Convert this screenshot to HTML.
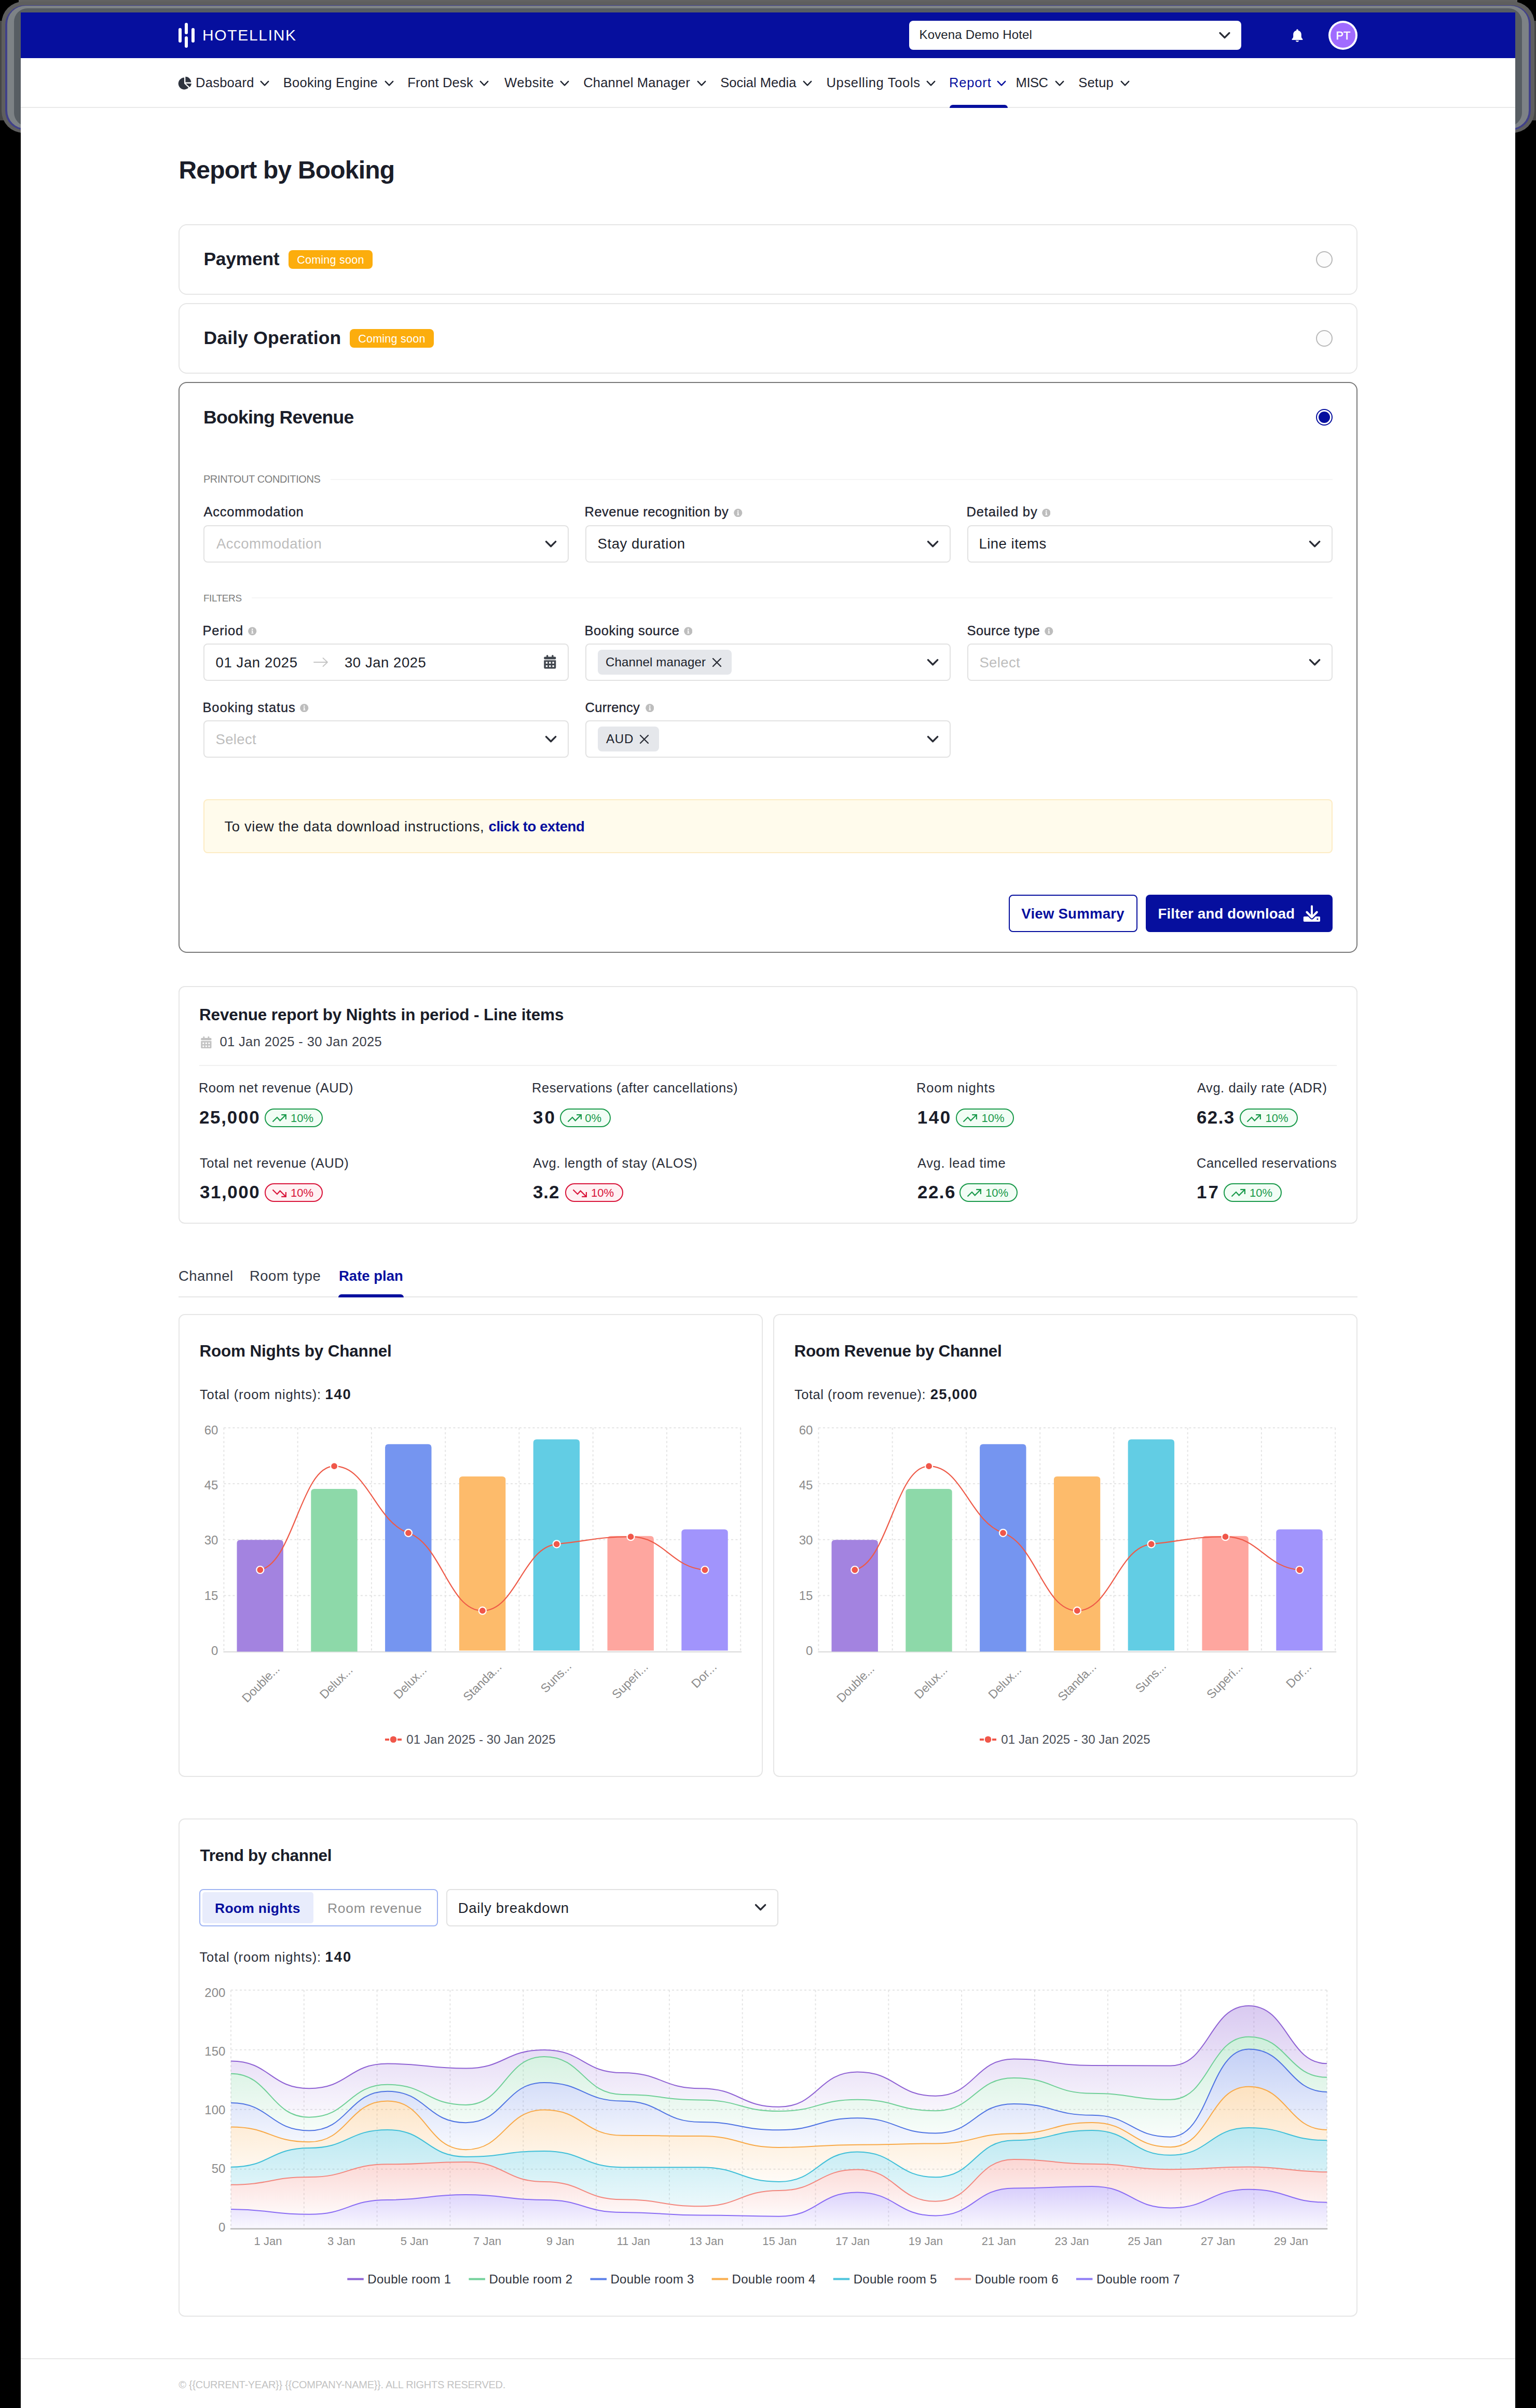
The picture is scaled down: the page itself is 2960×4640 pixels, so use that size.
<!DOCTYPE html>
<html><head><meta charset="utf-8"><title>Report by Booking</title>
<style>
html,body{margin:0;padding:0;background:#000;}
body{width:2960px;height:4640px;overflow:hidden;position:relative;font-family:"Liberation Sans", sans-serif;}
#page{position:absolute;left:0;top:0;width:2960px;height:4640px;overflow:hidden;}
#page div,#page svg,#page span.t{position:absolute;box-sizing:border-box;}
span.t{white-space:nowrap;font-family:"Liberation Sans", sans-serif;}
</style></head>
<body>
<div id="page">
<div style="left:36px;top:0px;width:2888px;height:4px;background:#626262;"></div>
<div style="left:0px;top:40px;width:2960px;height:192px;background:#454545;"></div>
<div style="left:3px;top:3px;width:2954px;height:253px;background:#5e5e5e;border-radius:42px;"></div>
<div style="left:10px;top:10px;width:2940px;height:241px;background:#40408a;border-radius:38px;"></div>
<div style="left:14px;top:11px;width:2932px;height:237px;background:#7d8286;border-radius:35px;"></div>
<div style="left:27px;top:16px;width:2906px;height:227px;background:#575d63;border-radius:26px;"></div>
<div style="left:40px;top:24px;width:2880px;height:4616px;background:#fff;"></div>
<div style="left:40px;top:24px;width:2880px;height:88px;background:#060f9e;"></div>
<div style="left:344px;top:54.2px;width:6.3px;height:28.3px;background:#fff;border-radius:3.2px;"></div>
<div style="left:356.2px;top:44px;width:6.3px;height:22px;background:#fff;border-radius:3.2px;"></div>
<div style="left:356.2px;top:70px;width:6.3px;height:21.8px;background:#fff;border-radius:3.2px;"></div>
<div style="left:369px;top:54.2px;width:6.3px;height:28.3px;background:#fff;border-radius:3.2px;"></div>
<span class="t" style="left:390.00px;top:53.40px;font-size:30px;line-height:30px;color:#fff;letter-spacing:1.662px;">HOTELLINK</span>
<div style="left:1752px;top:40px;width:640px;height:56px;background:#fff;border-radius:8px;"></div>
<span class="t" style="left:1771.50px;top:55.40px;font-size:24px;line-height:24px;color:#1c1f2b;letter-spacing:0.159px;">Kovena Demo Hotel</span>
<svg style="left:2346px;top:58px;" width="28" height="20" viewBox="0 0 28 20"><path d="M5 5.5 L14 14.5 L23 5.5" fill="none" stroke="#2a2d36" stroke-width="3.2" stroke-linecap="round" stroke-linejoin="round"/></svg>
<svg style="left:2488px;top:55px;" width="24" height="26" viewBox="0 0 24 26"><path d="M12 1.2c-1 0-1.8.8-1.8 1.8v.7C6.6 4.5 4.2 7.6 4.2 11.2v4.3c0 1.4-.6 2.8-1.6 3.8l-.9.9c-.6.6-.2 1.7.7 1.7h19.2c.9 0 1.3-1.1.7-1.7l-.9-.9c-1-1-1.6-2.400-1.6-3.800v-4.300c0-3.600-2.400-6.700-6-7.500V3c0-1-.8-1.800-1.800-1.800z" fill="#fff"/><path d="M8.800 23.300h6.400c-.300 1.500-1.600 2.500-3.200 2.500s-2.900-1-3.200-2.500z" fill="#fff"/></svg>
<div style="left:2560px;top:40px;width:56px;height:56px;background:#fff;border-radius:50%;"></div>
<div style="left:2564px;top:44px;width:48px;height:48px;background:#a06bff;border-radius:50%;"></div>
<span class="t" style="left:2574.40px;top:58.80px;font-size:21.5px;line-height:21.5px;color:#fff;letter-spacing:0.260px;-webkit-text-stroke:0.6px #fff;">PT</span>
<div style="left:40px;top:206px;width:2880px;height:2px;background:#e9e9e9;"></div>
<svg style="left:343px;top:147px;" width="28" height="26" viewBox="0 0 28 26"><path d="M12 2.600 A11.400 11.400 0 1 0 20.300 21.900 L12 14 Z" fill="#2f343f"/><path d="M14.400 0.800 V11.600 H25.300 A11 11 0 0 0 14.400 0.800 Z" fill="#2f343f"/><path d="M15.200 14 H26 A11.500 11.500 0 0 1 22.600 20.900 Z" fill="#2f343f"/></svg>
<span class="t" style="left:377.10px;top:146.80px;font-size:25.5px;line-height:25.5px;color:#1f2430;letter-spacing:0.245px;">Dasboard</span>
<svg style="left:500px;top:152px;" width="20" height="18" viewBox="0 0 20 18"><path d="M2.800 4.800 L10 12.300 L17.200 4.800" fill="none" stroke="#1f2430" stroke-width="2.500" stroke-linecap="round" stroke-linejoin="round"/></svg>
<span class="t" style="left:545.80px;top:146.80px;font-size:25.5px;line-height:25.5px;color:#1f2430;letter-spacing:0.257px;">Booking Engine</span>
<svg style="left:740px;top:152px;" width="20" height="18" viewBox="0 0 20 18"><path d="M2.800 4.800 L10 12.300 L17.200 4.800" fill="none" stroke="#1f2430" stroke-width="2.500" stroke-linecap="round" stroke-linejoin="round"/></svg>
<span class="t" style="left:785.20px;top:146.80px;font-size:25.5px;line-height:25.5px;color:#1f2430;letter-spacing:0.195px;">Front Desk</span>
<svg style="left:923.3px;top:152px;" width="20" height="18" viewBox="0 0 20 18"><path d="M2.800 4.800 L10 12.300 L17.200 4.800" fill="none" stroke="#1f2430" stroke-width="2.500" stroke-linecap="round" stroke-linejoin="round"/></svg>
<span class="t" style="left:972.00px;top:146.80px;font-size:25.5px;line-height:25.5px;color:#1f2430;letter-spacing:0.571px;">Website</span>
<svg style="left:1078px;top:152px;" width="20" height="18" viewBox="0 0 20 18"><path d="M2.800 4.800 L10 12.300 L17.200 4.800" fill="none" stroke="#1f2430" stroke-width="2.500" stroke-linecap="round" stroke-linejoin="round"/></svg>
<span class="t" style="left:1124.20px;top:146.80px;font-size:25.5px;line-height:25.5px;color:#1f2430;letter-spacing:0.198px;">Channel Manager</span>
<svg style="left:1342px;top:152px;" width="20" height="18" viewBox="0 0 20 18"><path d="M2.800 4.800 L10 12.300 L17.200 4.800" fill="none" stroke="#1f2430" stroke-width="2.500" stroke-linecap="round" stroke-linejoin="round"/></svg>
<span class="t" style="left:1388.20px;top:146.80px;font-size:25.5px;line-height:25.5px;color:#1f2430;letter-spacing:0.017px;">Social Media</span>
<svg style="left:1545.5px;top:152px;" width="20" height="18" viewBox="0 0 20 18"><path d="M2.800 4.800 L10 12.300 L17.200 4.800" fill="none" stroke="#1f2430" stroke-width="2.500" stroke-linecap="round" stroke-linejoin="round"/></svg>
<span class="t" style="left:1592.50px;top:146.80px;font-size:25.5px;line-height:25.5px;color:#1f2430;letter-spacing:0.675px;">Upselling Tools</span>
<svg style="left:1784px;top:152px;" width="20" height="18" viewBox="0 0 20 18"><path d="M2.800 4.800 L10 12.300 L17.200 4.800" fill="none" stroke="#1f2430" stroke-width="2.500" stroke-linecap="round" stroke-linejoin="round"/></svg>
<span class="t" style="left:1829.00px;top:146.80px;font-size:25.5px;line-height:25.5px;color:#060f9e;letter-spacing:0.849px;">Report</span>
<svg style="left:1919.5px;top:152px;" width="20" height="18" viewBox="0 0 20 18"><path d="M2.800 4.800 L10 12.300 L17.200 4.800" fill="none" stroke="#060f9e" stroke-width="2.500" stroke-linecap="round" stroke-linejoin="round"/></svg>
<span class="t" style="left:1957.60px;top:146.80px;font-size:25.5px;line-height:25.5px;color:#1f2430;letter-spacing:-0.445px;">MISC</span>
<svg style="left:2031.5px;top:152px;" width="20" height="18" viewBox="0 0 20 18"><path d="M2.800 4.800 L10 12.300 L17.200 4.800" fill="none" stroke="#1f2430" stroke-width="2.500" stroke-linecap="round" stroke-linejoin="round"/></svg>
<span class="t" style="left:2078.20px;top:146.80px;font-size:25.5px;line-height:25.5px;color:#1f2430;letter-spacing:0.236px;">Setup</span>
<svg style="left:2157.5px;top:152px;" width="20" height="18" viewBox="0 0 20 18"><path d="M2.800 4.800 L10 12.300 L17.200 4.800" fill="none" stroke="#1f2430" stroke-width="2.500" stroke-linecap="round" stroke-linejoin="round"/></svg>
<div style="left:1830px;top:202px;width:112px;height:6px;background:#060f9e;border-radius:6px 6px 0 0;"></div>
<span class="t" style="left:344.50px;top:304.40px;font-size:48px;line-height:48px;color:#1a1d29;font-weight:700;letter-spacing:-0.797px;">Report by Booking</span>
<div style="left:344px;top:432px;width:2272px;height:136px;border:2px solid #e6e6e6;border-radius:16px;background:#fff;"></div>
<div style="left:344px;top:584px;width:2272px;height:136px;border:2px solid #e6e6e6;border-radius:16px;background:#fff;"></div>
<div style="left:344px;top:736px;width:2272px;height:1100px;border:2px solid #787878;border-radius:16px;background:#fff;"></div>
<span class="t" style="left:392.50px;top:482.40px;font-size:35.5px;line-height:35.5px;color:#1a1d29;font-weight:700;letter-spacing:-0.318px;">Payment</span>
<div style="left:556px;top:482px;width:162px;height:36px;background:#fcad0d;border-radius:8px;"></div>
<span class="t" style="left:572.20px;top:490.80px;font-size:21.5px;line-height:21.5px;color:#fff;letter-spacing:0.248px;">Coming soon</span>
<span class="t" style="left:392.50px;top:634.40px;font-size:35.5px;line-height:35.5px;color:#1a1d29;font-weight:700;letter-spacing:0.173px;">Daily Operation</span>
<div style="left:674px;top:634px;width:162px;height:36px;background:#fcad0d;border-radius:8px;"></div>
<span class="t" style="left:690.20px;top:642.80px;font-size:21.5px;line-height:21.5px;color:#fff;letter-spacing:0.248px;">Coming soon</span>
<div style="left:2536px;top:484px;width:32px;height:32px;border:2px solid #b9b9b9;border-radius:50%;background:#fcfcfc;"></div>
<div style="left:2536px;top:636px;width:32px;height:32px;border:2px solid #b9b9b9;border-radius:50%;background:#fcfcfc;"></div>
<div style="left:2536px;top:788px;width:32px;height:32px;border:2.500px solid #060f9e;border-radius:50%;background:#fff;"></div>
<div style="left:2541px;top:793px;width:22px;height:22px;background:#060f9e;border-radius:50%;"></div>
<span class="t" style="left:392.00px;top:786.90px;font-size:35.5px;line-height:35.5px;color:#1a1d29;font-weight:700;letter-spacing:-0.677px;">Booking Revenue</span>
<span class="t" style="left:391.90px;top:913.20px;font-size:20px;line-height:20px;color:#7d7d7d;letter-spacing:-0.363px;">PRINTOUT CONDITIONS</span>
<div style="left:637px;top:923px;width:1931px;height:2px;background:#f5f5f5;"></div>
<span class="t" style="left:391.90px;top:1142.60px;font-size:19px;line-height:19px;color:#7d7d7d;letter-spacing:-0.424px;">FILTERS</span>
<div style="left:484.7px;top:1151px;width:2083.3px;height:2px;background:#f5f5f5;"></div>
<span class="t" style="left:392.50px;top:974.40px;font-size:25.5px;line-height:25.5px;color:#1f2430;letter-spacing:0.787px;-webkit-text-stroke:0.35px #1f2430;">Accommodation</span>
<span class="t" style="left:1126.60px;top:974.40px;font-size:25.5px;line-height:25.5px;color:#1f2430;letter-spacing:0.439px;-webkit-text-stroke:0.35px #1f2430;">Revenue recognition by</span>
<svg style="left:1414px;top:979.5px;" width="16.5" height="16.5" viewBox="0 0 16.5 16.5"><circle cx="8.250" cy="8.250" r="8.100" fill="#bdbdbd"/><circle cx="8.250" cy="4.700" r="1.350" fill="#fff"/><path d="M6.700 7.100h2.700v4.300h1v1.300H6.300v-1.300h1.100V8.400H6.700z" fill="#fff"/></svg>
<span class="t" style="left:1862.50px;top:974.40px;font-size:25.5px;line-height:25.5px;color:#1f2430;letter-spacing:0.858px;-webkit-text-stroke:0.35px #1f2430;">Detailed by</span>
<svg style="left:2007.7px;top:979.5px;" width="16.5" height="16.5" viewBox="0 0 16.5 16.5"><circle cx="8.250" cy="8.250" r="8.100" fill="#bdbdbd"/><circle cx="8.250" cy="4.700" r="1.350" fill="#fff"/><path d="M6.700 7.100h2.700v4.300h1v1.300H6.300v-1.300h1.100V8.400H6.700z" fill="#fff"/></svg>
<span class="t" style="left:390.50px;top:1202.90px;font-size:25.5px;line-height:25.5px;color:#1f2430;letter-spacing:0.794px;-webkit-text-stroke:0.35px #1f2430;">Period</span>
<svg style="left:478px;top:1208px;" width="16.5" height="16.5" viewBox="0 0 16.5 16.5"><circle cx="8.250" cy="8.250" r="8.100" fill="#bdbdbd"/><circle cx="8.250" cy="4.700" r="1.350" fill="#fff"/><path d="M6.700 7.100h2.700v4.300h1v1.300H6.300v-1.300h1.100V8.400H6.700z" fill="#fff"/></svg>
<span class="t" style="left:1126.60px;top:1202.90px;font-size:25.5px;line-height:25.5px;color:#1f2430;letter-spacing:0.508px;-webkit-text-stroke:0.35px #1f2430;">Booking source</span>
<svg style="left:1317.7px;top:1208px;" width="16.5" height="16.5" viewBox="0 0 16.5 16.5"><circle cx="8.250" cy="8.250" r="8.100" fill="#bdbdbd"/><circle cx="8.250" cy="4.700" r="1.350" fill="#fff"/><path d="M6.700 7.100h2.700v4.300h1v1.300H6.300v-1.300h1.100V8.400H6.700z" fill="#fff"/></svg>
<span class="t" style="left:1863.50px;top:1202.90px;font-size:25.5px;line-height:25.5px;color:#1f2430;letter-spacing:0.410px;-webkit-text-stroke:0.35px #1f2430;">Source type</span>
<svg style="left:2013.4px;top:1208px;" width="16.5" height="16.5" viewBox="0 0 16.5 16.5"><circle cx="8.250" cy="8.250" r="8.100" fill="#bdbdbd"/><circle cx="8.250" cy="4.700" r="1.350" fill="#fff"/><path d="M6.700 7.100h2.700v4.300h1v1.300H6.300v-1.300h1.100V8.400H6.700z" fill="#fff"/></svg>
<span class="t" style="left:390.50px;top:1350.80px;font-size:25.5px;line-height:25.5px;color:#1f2430;letter-spacing:0.845px;-webkit-text-stroke:0.35px #1f2430;">Booking status</span>
<svg style="left:578px;top:1355.9px;" width="16.5" height="16.5" viewBox="0 0 16.5 16.5"><circle cx="8.250" cy="8.250" r="8.100" fill="#bdbdbd"/><circle cx="8.250" cy="4.700" r="1.350" fill="#fff"/><path d="M6.700 7.100h2.700v4.300h1v1.300H6.300v-1.300h1.100V8.400H6.700z" fill="#fff"/></svg>
<span class="t" style="left:1127.60px;top:1350.80px;font-size:25.5px;line-height:25.5px;color:#1f2430;letter-spacing:0.244px;-webkit-text-stroke:0.35px #1f2430;">Currency</span>
<svg style="left:1243.75px;top:1355.9px;" width="16.5" height="16.5" viewBox="0 0 16.5 16.5"><circle cx="8.250" cy="8.250" r="8.100" fill="#bdbdbd"/><circle cx="8.250" cy="4.700" r="1.350" fill="#fff"/><path d="M6.700 7.100h2.700v4.300h1v1.300H6.300v-1.300h1.100V8.400H6.700z" fill="#fff"/></svg>
<div style="left:392px;top:1012px;width:704px;height:72px;border:2px solid #e2e2e2;border-radius:8px;background:#fff;"></div>
<svg style="left:1047px;top:1038px;" width="28" height="22" viewBox="0 0 28 22"><path d="M5.500 5.600 L14.600 14.700 L23.700 5.600" fill="none" stroke="#2a2d36" stroke-width="3.400" stroke-linecap="round" stroke-linejoin="round"/></svg>
<span class="t" style="left:417.00px;top:1034.40px;font-size:27.5px;line-height:27.5px;color:#bdbdbd;letter-spacing:0.468px;">Accommodation</span>
<div style="left:1128px;top:1012px;width:704px;height:72px;border:2px solid #e2e2e2;border-radius:8px;background:#fff;"></div>
<svg style="left:1783px;top:1038px;" width="28" height="22" viewBox="0 0 28 22"><path d="M5.500 5.600 L14.600 14.700 L23.700 5.600" fill="none" stroke="#2a2d36" stroke-width="3.400" stroke-linecap="round" stroke-linejoin="round"/></svg>
<span class="t" style="left:1151.60px;top:1034.40px;font-size:27.5px;line-height:27.5px;color:#1c1f2b;letter-spacing:0.533px;">Stay duration</span>
<div style="left:1864px;top:1012px;width:704px;height:72px;border:2px solid #e2e2e2;border-radius:8px;background:#fff;"></div>
<svg style="left:2519px;top:1038px;" width="28" height="22" viewBox="0 0 28 22"><path d="M5.500 5.600 L14.600 14.700 L23.700 5.600" fill="none" stroke="#2a2d36" stroke-width="3.400" stroke-linecap="round" stroke-linejoin="round"/></svg>
<span class="t" style="left:1886.40px;top:1034.40px;font-size:27.5px;line-height:27.5px;color:#1c1f2b;letter-spacing:0.502px;">Line items</span>
<div style="left:392px;top:1240px;width:704px;height:72px;border:2px solid #e2e2e2;border-radius:8px;background:#fff;"></div>
<span class="t" style="left:415.50px;top:1262.90px;font-size:27.5px;line-height:27.5px;color:#1c1f2b;letter-spacing:0.611px;">01 Jan 2025</span>
<svg style="left:603px;top:1264px;" width="32" height="24" viewBox="0 0 32 24"><path d="M2 12 H28 M19.500 4 L28 12 L19.500 20" fill="none" stroke="#c4c4c4" stroke-width="1.800" stroke-linecap="round" stroke-linejoin="round"/></svg>
<span class="t" style="left:664.00px;top:1262.90px;font-size:27.5px;line-height:27.5px;color:#1c1f2b;letter-spacing:0.551px;">30 Jan 2025</span>
<svg style="left:1048px;top:1262px;" width="24" height="27" viewBox="0 0 24 27"><g fill="#41464e"><rect x="0.300" y="3.500" width="23" height="5" rx="1.800"/><rect x="5" y="0" width="3.300" height="5" rx="1.600"/><rect x="15.300" y="0" width="3.300" height="5" rx="1.600"/><path d="M0.300 10.300 H23.300 V24.200 a2.200 2.200 0 0 1 -2.200 2.200 H2.500 a2.200 2.200 0 0 1 -2.200 -2.200 Z M3.800 13.300 v3.400 h3.400 v-3.400 Z M10.100 13.300 v3.400 h3.400 v-3.400 Z M16.400 13.300 v3.400 h3.400 v-3.400 Z M3.800 19.900 v3.400 h3.400 v-3.400 Z M10.100 19.900 v3.400 h3.400 v-3.400 Z M16.400 19.900 v3.400 h3.400 v-3.400 Z" fill-rule="evenodd"/></g></svg>
<div style="left:1128px;top:1240px;width:704px;height:72px;border:2px solid #e2e2e2;border-radius:8px;background:#fff;"></div>
<svg style="left:1783px;top:1266px;" width="28" height="22" viewBox="0 0 28 22"><path d="M5.500 5.600 L14.600 14.700 L23.700 5.600" fill="none" stroke="#2a2d36" stroke-width="3.400" stroke-linecap="round" stroke-linejoin="round"/></svg>
<div style="left:1152px;top:1252px;width:258px;height:48px;background:#e5e7eb;border-radius:8px;"></div>
<span class="t" style="left:1167.00px;top:1264.10px;font-size:24px;line-height:24px;color:#1c1f2b;letter-spacing:0.157px;">Channel manager</span>
<svg style="left:1371.4px;top:1265.5px;" width="21" height="21" viewBox="0 0 21 21"><path d="M3 3 L18 18 M18 3 L3 18" fill="none" stroke="#2a2d36" stroke-width="2.300" stroke-linecap="round"/></svg>
<div style="left:1864px;top:1240px;width:704px;height:72px;border:2px solid #e2e2e2;border-radius:8px;background:#fff;"></div>
<svg style="left:2519px;top:1266px;" width="28" height="22" viewBox="0 0 28 22"><path d="M5.500 5.600 L14.600 14.700 L23.700 5.600" fill="none" stroke="#2a2d36" stroke-width="3.400" stroke-linecap="round" stroke-linejoin="round"/></svg>
<span class="t" style="left:1887.40px;top:1262.90px;font-size:27.5px;line-height:27.5px;color:#bdbdbd;letter-spacing:0.362px;">Select</span>
<div style="left:392px;top:1388px;width:704px;height:72px;border:2px solid #e2e2e2;border-radius:8px;background:#fff;"></div>
<svg style="left:1047px;top:1414px;" width="28" height="22" viewBox="0 0 28 22"><path d="M5.500 5.600 L14.600 14.700 L23.700 5.600" fill="none" stroke="#2a2d36" stroke-width="3.400" stroke-linecap="round" stroke-linejoin="round"/></svg>
<span class="t" style="left:415.50px;top:1410.80px;font-size:27.5px;line-height:27.5px;color:#bdbdbd;letter-spacing:0.342px;">Select</span>
<div style="left:1128px;top:1388px;width:704px;height:72px;border:2px solid #e2e2e2;border-radius:8px;background:#fff;"></div>
<svg style="left:1783px;top:1414px;" width="28" height="22" viewBox="0 0 28 22"><path d="M5.500 5.600 L14.600 14.700 L23.700 5.600" fill="none" stroke="#2a2d36" stroke-width="3.400" stroke-linecap="round" stroke-linejoin="round"/></svg>
<div style="left:1152px;top:1400px;width:118px;height:48px;background:#e5e7eb;border-radius:8px;"></div>
<span class="t" style="left:1168.00px;top:1412.10px;font-size:24px;line-height:24px;color:#1c1f2b;letter-spacing:0.830px;">AUD</span>
<svg style="left:1230.8px;top:1413.5px;" width="21" height="21" viewBox="0 0 21 21"><path d="M3 3 L18 18 M18 3 L3 18" fill="none" stroke="#2a2d36" stroke-width="2.300" stroke-linecap="round"/></svg>
<div style="left:392px;top:1540px;width:2176px;height:104px;background:#fffbec;border:2px solid #fdecc4;border-radius:8px;"></div>
<span class="t" style="left:432.50px;top:1579.40px;font-size:27.5px;line-height:27.5px;color:#1c1f2b;letter-spacing:0.570px;">To view the data download instructions,</span>
<span class="t" style="left:941.50px;top:1579.40px;font-size:27.5px;line-height:27.5px;color:#060f9e;font-weight:700;letter-spacing:-0.410px;">click to extend</span>
<div style="left:1944px;top:1724px;width:248px;height:72px;border:2px solid #060f9e;border-radius:8px;background:#fff;"></div>
<span class="t" style="left:1968.30px;top:1747.40px;font-size:27.5px;line-height:27.5px;color:#060f9e;font-weight:700;letter-spacing:0.277px;">View Summary</span>
<div style="left:2208px;top:1724px;width:360px;height:72px;background:#060f9e;border-radius:8px;"></div>
<span class="t" style="left:2231.50px;top:1747.40px;font-size:27.5px;line-height:27.5px;color:#fff;font-weight:700;letter-spacing:0.215px;">Filter and download</span>
<svg style="left:2510px;top:1742px;" width="36" height="36" viewBox="0 0 36 36"><rect x="1.800" y="24" width="32.200" height="10" rx="1.800" fill="#fff"/><path d="M18 4.200 V24 M8.400 15.500 L18 25.600 L27.800 15.500" fill="none" stroke="#060f9e" stroke-width="8" stroke-linecap="round" stroke-linejoin="round"/><path d="M18 4.200 V24 M8.400 15.500 L18 25.600 L27.800 15.500" fill="none" stroke="#fff" stroke-width="4" stroke-linecap="round" stroke-linejoin="round"/><circle cx="28.900" cy="29" r="1.600" fill="#060f9e"/></svg>
<div style="left:344px;top:1900px;width:2272px;height:458px;border:2px solid #e6e6e6;border-radius:12px;background:#fff;"></div>
<span class="t" style="left:383.90px;top:1940.40px;font-size:31.5px;line-height:31.5px;color:#1a1d29;font-weight:700;letter-spacing:-0.136px;">Revenue report by Nights in period - Line items</span>
<svg style="left:387.4px;top:1996.5px;" width="21.12" height="23.76" viewBox="0 0 24 27"><g fill="#c2c2c2"><rect x="0.300" y="3.500" width="23" height="5" rx="1.800"/><rect x="5" y="0" width="3.300" height="5" rx="1.600"/><rect x="15.300" y="0" width="3.300" height="5" rx="1.600"/><path d="M0.300 10.300 H23.300 V24.200 a2.200 2.200 0 0 1 -2.200 2.200 H2.500 a2.200 2.200 0 0 1 -2.200 -2.200 Z M3.800 13.300 v3.400 h3.400 v-3.400 Z M10.100 13.300 v3.400 h3.400 v-3.400 Z M16.400 13.300 v3.400 h3.400 v-3.400 Z M3.800 19.900 v3.400 h3.400 v-3.400 Z M10.100 19.900 v3.400 h3.400 v-3.400 Z M16.400 19.900 v3.400 h3.400 v-3.400 Z" fill-rule="evenodd"/></g></svg>
<span class="t" style="left:423.40px;top:1995.10px;font-size:25.5px;line-height:25.5px;color:#3c404a;letter-spacing:0.374px;">01 Jan 2025 - 30 Jan 2025</span>
<div style="left:384px;top:2052px;width:2192px;height:2px;background:#f0f0f0;"></div>
<span class="t" style="left:382.90px;top:2084.40px;font-size:25.5px;line-height:25.5px;color:#2a2e39;letter-spacing:0.471px;">Room net revenue (AUD)</span>
<span class="t" style="left:383.90px;top:2135.00px;font-size:35px;line-height:35px;color:#1a1d29;font-weight:700;letter-spacing:1.763px;">25,000</span>
<div style="left:510px;top:2136px;width:112px;height:36px;border:2px solid #1a9a4b;border-radius:18px;background:#f2fdf5;"></div>
<svg style="left:523.6px;top:2145.6px;" width="29" height="18" viewBox="0 0 29 18"><path d="M1.500 15.500 L10 7 L15.700 13.300 L26.500 2.500 M18.200 2.200 H26.900 V11" fill="none" stroke="#1a9a4b" stroke-width="2.200" stroke-linecap="butt" stroke-linejoin="miter"/></svg>
<span class="t" style="left:560.03px;top:2144.20px;font-size:22px;line-height:22px;color:#1a9a4b;">10%</span>
<span class="t" style="left:384.90px;top:2228.60px;font-size:25.5px;line-height:25.5px;color:#2a2e39;letter-spacing:0.607px;">Total net revenue (AUD)</span>
<span class="t" style="left:384.90px;top:2278.90px;font-size:35px;line-height:35px;color:#1a1d29;font-weight:700;letter-spacing:1.563px;">31,000</span>
<div style="left:510px;top:2280px;width:112px;height:36px;border:2px solid #d9143a;border-radius:18px;background:#fff1f3;"></div>
<svg style="left:523.6px;top:2289.6px;" width="29" height="18" viewBox="0 0 29 18"><path d="M1.500 2.500 L10 11 L15.700 4.700 L26.500 15.500 M18.200 15.800 H26.900 V7" fill="none" stroke="#d9143a" stroke-width="2.200" stroke-linecap="butt" stroke-linejoin="miter"/></svg>
<span class="t" style="left:560.03px;top:2288.20px;font-size:22px;line-height:22px;color:#d9143a;">10%</span>
<span class="t" style="left:1025.00px;top:2084.40px;font-size:25.5px;line-height:25.5px;color:#2a2e39;letter-spacing:0.548px;">Reservations (after cancellations)</span>
<span class="t" style="left:1027.00px;top:2135.00px;font-size:35px;line-height:35px;color:#1a1d29;font-weight:700;letter-spacing:3.000px;">30</span>
<div style="left:1079px;top:2136px;width:98px;height:36px;border:2px solid #1a9a4b;border-radius:18px;background:#f2fdf5;"></div>
<svg style="left:1092.6px;top:2145.6px;" width="29" height="18" viewBox="0 0 29 18"><path d="M1.500 15.500 L10 7 L15.700 13.300 L26.500 2.500 M18.200 2.200 H26.900 V11" fill="none" stroke="#1a9a4b" stroke-width="2.200" stroke-linecap="butt" stroke-linejoin="miter"/></svg>
<span class="t" style="left:1127.26px;top:2144.20px;font-size:22px;line-height:22px;color:#1a9a4b;">0%</span>
<span class="t" style="left:1027.00px;top:2228.60px;font-size:25.5px;line-height:25.5px;color:#2a2e39;letter-spacing:0.602px;">Avg. length of stay (ALOS)</span>
<span class="t" style="left:1027.00px;top:2278.90px;font-size:35px;line-height:35px;color:#1a1d29;font-weight:700;letter-spacing:0.905px;">3.2</span>
<div style="left:1089px;top:2280px;width:112px;height:36px;border:2px solid #d9143a;border-radius:18px;background:#fff1f3;"></div>
<svg style="left:1102.6px;top:2289.6px;" width="29" height="18" viewBox="0 0 29 18"><path d="M1.500 2.500 L10 11 L15.700 4.700 L26.500 15.500 M18.200 15.800 H26.900 V7" fill="none" stroke="#d9143a" stroke-width="2.200" stroke-linecap="butt" stroke-linejoin="miter"/></svg>
<span class="t" style="left:1139.03px;top:2288.20px;font-size:22px;line-height:22px;color:#d9143a;">10%</span>
<span class="t" style="left:1766.00px;top:2084.40px;font-size:25.5px;line-height:25.5px;color:#2a2e39;letter-spacing:0.800px;">Room nights</span>
<span class="t" style="left:1767.80px;top:2135.00px;font-size:35px;line-height:35px;color:#1a1d29;font-weight:700;letter-spacing:2.485px;">140</span>
<div style="left:1841.5px;top:2136px;width:112px;height:36px;border:2px solid #1a9a4b;border-radius:18px;background:#f2fdf5;"></div>
<svg style="left:1855.1px;top:2145.6px;" width="29" height="18" viewBox="0 0 29 18"><path d="M1.500 15.500 L10 7 L15.700 13.300 L26.500 2.500 M18.200 2.200 H26.900 V11" fill="none" stroke="#1a9a4b" stroke-width="2.200" stroke-linecap="butt" stroke-linejoin="miter"/></svg>
<span class="t" style="left:1891.53px;top:2144.20px;font-size:22px;line-height:22px;color:#1a9a4b;">10%</span>
<span class="t" style="left:1768.00px;top:2228.60px;font-size:25.5px;line-height:25.5px;color:#2a2e39;letter-spacing:0.651px;">Avg. lead time</span>
<span class="t" style="left:1768.00px;top:2278.90px;font-size:35px;line-height:35px;color:#1a1d29;font-weight:700;letter-spacing:1.415px;">22.6</span>
<div style="left:1849px;top:2280px;width:112px;height:36px;border:2px solid #1a9a4b;border-radius:18px;background:#f2fdf5;"></div>
<svg style="left:1862.6px;top:2289.6px;" width="29" height="18" viewBox="0 0 29 18"><path d="M1.500 15.500 L10 7 L15.700 13.300 L26.500 2.500 M18.200 2.200 H26.900 V11" fill="none" stroke="#1a9a4b" stroke-width="2.200" stroke-linecap="butt" stroke-linejoin="miter"/></svg>
<span class="t" style="left:1899.03px;top:2288.20px;font-size:22px;line-height:22px;color:#1a9a4b;">10%</span>
<span class="t" style="left:2307.00px;top:2084.40px;font-size:25.5px;line-height:25.5px;color:#2a2e39;letter-spacing:0.548px;">Avg. daily rate (ADR)</span>
<span class="t" style="left:2306.00px;top:2135.00px;font-size:35px;line-height:35px;color:#1a1d29;font-weight:700;letter-spacing:1.348px;">62.3</span>
<div style="left:2388.5px;top:2136px;width:112px;height:36px;border:2px solid #1a9a4b;border-radius:18px;background:#f2fdf5;"></div>
<svg style="left:2402.1px;top:2145.6px;" width="29" height="18" viewBox="0 0 29 18"><path d="M1.500 15.500 L10 7 L15.700 13.300 L26.500 2.500 M18.200 2.200 H26.900 V11" fill="none" stroke="#1a9a4b" stroke-width="2.200" stroke-linecap="butt" stroke-linejoin="miter"/></svg>
<span class="t" style="left:2438.53px;top:2144.20px;font-size:22px;line-height:22px;color:#1a9a4b;">10%</span>
<span class="t" style="left:2306.00px;top:2228.60px;font-size:25.5px;line-height:25.5px;color:#2a2e39;letter-spacing:0.494px;">Cancelled reservations</span>
<span class="t" style="left:2306.00px;top:2278.90px;font-size:35px;line-height:35px;color:#1a1d29;font-weight:700;letter-spacing:3.000px;">17</span>
<div style="left:2358px;top:2280px;width:112px;height:36px;border:2px solid #1a9a4b;border-radius:18px;background:#f2fdf5;"></div>
<svg style="left:2371.6px;top:2289.6px;" width="29" height="18" viewBox="0 0 29 18"><path d="M1.500 15.500 L10 7 L15.700 13.300 L26.500 2.500 M18.200 2.200 H26.900 V11" fill="none" stroke="#1a9a4b" stroke-width="2.200" stroke-linecap="butt" stroke-linejoin="miter"/></svg>
<span class="t" style="left:2408.03px;top:2288.20px;font-size:22px;line-height:22px;color:#1a9a4b;">10%</span>
<span class="t" style="left:344.00px;top:2444.70px;font-size:27.5px;line-height:27.5px;color:#333845;letter-spacing:0.445px;">Channel</span>
<span class="t" style="left:481.00px;top:2444.70px;font-size:27.5px;line-height:27.5px;color:#333845;letter-spacing:0.477px;">Room type</span>
<span class="t" style="left:653.00px;top:2444.70px;font-size:27.5px;line-height:27.5px;color:#060f9e;font-weight:700;">Rate plan</span>
<div style="left:344px;top:2498px;width:2272px;height:2px;background:#e6e6e6;"></div>
<div style="left:652px;top:2494px;width:126px;height:6px;background:#060f9e;border-radius:6px 6px 0 0;"></div>
<div style="left:344px;top:2532px;width:1126px;height:892px;border:2px solid #e6e6e6;border-radius:12px;background:#fff;"></div>
<span class="t" style="left:384.50px;top:2587.80px;font-size:31.5px;line-height:31.5px;color:#1a1d29;font-weight:700;letter-spacing:-0.203px;">Room Nights by Channel</span>
<span class="t" style="left:385.00px;top:2675.00px;font-size:25.5px;line-height:25.5px;color:#2a2e39;letter-spacing:0.781px;">Total (room nights):</span>
<span class="t" style="left:626.50px;top:2673.20px;font-size:27.5px;line-height:27.5px;color:#1a1d29;font-weight:700;letter-spacing:1.756px;">140</span>
<svg style="left:380px;top:2730px;" width="1080" height="660" viewBox="380 2730 1080 660"><path d="M431.4 2751.2 H1427.2" stroke="#e4e4e4" stroke-width="2" stroke-dasharray="4 4.500" fill="none"/><path d="M431.4 2859.0 H1427.2" stroke="#e4e4e4" stroke-width="2" stroke-dasharray="4 4.500" fill="none"/><path d="M431.4 2966.8 H1427.2" stroke="#e4e4e4" stroke-width="2" stroke-dasharray="4 4.500" fill="none"/><path d="M431.4 3074.6 H1427.2" stroke="#e4e4e4" stroke-width="2" stroke-dasharray="4 4.500" fill="none"/><path d="M431.4 2751.2 V3182.4" stroke="#e4e4e4" stroke-width="2" stroke-dasharray="4 4.500" fill="none"/><path d="M573.7 2751.2 V3182.4" stroke="#e4e4e4" stroke-width="2" stroke-dasharray="4 4.500" fill="none"/><path d="M715.9 2751.2 V3182.4" stroke="#e4e4e4" stroke-width="2" stroke-dasharray="4 4.500" fill="none"/><path d="M858.2 2751.2 V3182.4" stroke="#e4e4e4" stroke-width="2" stroke-dasharray="4 4.500" fill="none"/><path d="M1000.4 2751.2 V3182.4" stroke="#e4e4e4" stroke-width="2" stroke-dasharray="4 4.500" fill="none"/><path d="M1142.7 2751.2 V3182.4" stroke="#e4e4e4" stroke-width="2" stroke-dasharray="4 4.500" fill="none"/><path d="M1284.9 2751.2 V3182.4" stroke="#e4e4e4" stroke-width="2" stroke-dasharray="4 4.500" fill="none"/><path d="M1427.2 2751.2 V3182.4" stroke="#e4e4e4" stroke-width="2" stroke-dasharray="4 4.500" fill="none"/><path d="M430.4 3183.0 H1429.2" stroke="#dedede" stroke-width="2.400" fill="none"/><path d="M456.5 3182.4 V2973.7 Q456.5 2967.2 463.0 2967.2 H539.4 Q545.9 2967.2 545.9 2973.7 V3182.4 Z" fill="#a383e0"/><path d="M599.3 3182.4 V2875.4 Q599.3 2868.9 605.8 2868.9 H682.2 Q688.7 2868.9 688.7 2875.4 V3182.4 Z" fill="#8dd9a9"/><path d="M742.1 3182.4 V2789.3 Q742.1 2782.8 748.6 2782.8 H825.0 Q831.5 2782.8 831.5 2789.3 V3182.4 Z" fill="#7595f0"/><path d="M884.9 3180.4 V2851.5 Q884.9 2845.0 891.4 2845.0 H967.8 Q974.3 2845.0 974.3 2851.5 V3180.4 Z" fill="#fdbb6b"/><path d="M1027.7 3180.4 V2780.0 Q1027.7 2773.5 1034.2 2773.5 H1110.6 Q1117.1 2773.5 1117.1 2780.0 V3180.4 Z" fill="#62cde4"/><path d="M1170.5 3180.4 V2966.3 Q1170.5 2959.8 1177.0 2959.8 H1253.4 Q1259.9 2959.8 1259.9 2966.3 V3180.4 Z" fill="#fea69f"/><path d="M1313.3 3180.4 V2953.6 Q1313.3 2947.1 1319.8 2947.1 H1396.2 Q1402.7 2947.1 1402.7 2953.6 V3180.4 Z" fill="#a194fc"/><path d="M501.30 3025.00 C565.58 3011.51 579.87 2825.20 644.15 2825.20 C708.43 2825.20 722.72 2931.24 787.00 2953.80 C851.28 2976.36 865.57 3103.70 929.85 3103.70 C994.13 3103.70 1008.42 2981.65 1072.70 2975.30 C1136.98 2968.95 1151.27 2961.20 1215.55 2961.20 C1279.83 2961.20 1294.12 3020.69 1358.40 3025.00" fill="none" stroke="#ee5a48" stroke-width="2.200"/><circle cx="501.3" cy="3025.0" r="7" fill="#f0574a" stroke="#fff" stroke-width="2.200"/><circle cx="644.1" cy="2825.2" r="7" fill="#f0574a" stroke="#fff" stroke-width="2.200"/><circle cx="787.0" cy="2953.8" r="7" fill="#f0574a" stroke="#fff" stroke-width="2.200"/><circle cx="929.8" cy="3103.7" r="7" fill="#f0574a" stroke="#fff" stroke-width="2.200"/><circle cx="1072.7" cy="2975.3" r="7" fill="#f0574a" stroke="#fff" stroke-width="2.200"/><circle cx="1215.5" cy="2961.2" r="7" fill="#f0574a" stroke="#fff" stroke-width="2.200"/><circle cx="1358.4" cy="3025.0" r="7" fill="#f0574a" stroke="#fff" stroke-width="2.200"/><text transform="translate(540.4 3217.2) rotate(-45)" text-anchor="end" font-size="23.500" fill="#8b8b8b" font-family='"Liberation Sans", sans-serif' textLength="91.2" lengthAdjust="spacing">Double...</text><text transform="translate(681.2 3219.4) rotate(-45)" text-anchor="end" font-size="23.500" fill="#8b8b8b" font-family='"Liberation Sans", sans-serif' textLength="78.4" lengthAdjust="spacing">Delux...</text><text transform="translate(823.7 3219.4) rotate(-45)" text-anchor="end" font-size="23.500" fill="#8b8b8b" font-family='"Liberation Sans", sans-serif' textLength="78.6" lengthAdjust="spacing">Delux...</text><text transform="translate(968.0 3213.5) rotate(-45)" text-anchor="end" font-size="23.500" fill="#8b8b8b" font-family='"Liberation Sans", sans-serif' textLength="93.0" lengthAdjust="spacing">Standa...</text><text transform="translate(1102.6 3212.0) rotate(-45)" text-anchor="end" font-size="23.500" fill="#8b8b8b" font-family='"Liberation Sans", sans-serif' textLength="72.4" lengthAdjust="spacing">Suns...</text><text transform="translate(1250.3 3213.5) rotate(-45)" text-anchor="end" font-size="23.500" fill="#8b8b8b" font-family='"Liberation Sans", sans-serif' textLength="86.8" lengthAdjust="spacing">Superi...</text><text transform="translate(1382.6 3213.5) rotate(-45)" text-anchor="end" font-size="23.500" fill="#8b8b8b" font-family='"Liberation Sans", sans-serif' textLength="57.4" lengthAdjust="spacing">Dor...</text><path d="M742 3352 H750 M766 3352 H774" stroke="#f0574a" stroke-width="4" fill="none"/><circle cx="758" cy="3351.800" r="6.300" fill="#f0574a"/></svg>
<span class="t" style="left:393.65px;top:2744.30px;font-size:24px;line-height:24px;color:#8b8b8b;">60</span>
<span class="t" style="left:393.65px;top:2850.00px;font-size:24px;line-height:24px;color:#8b8b8b;">45</span>
<span class="t" style="left:393.65px;top:2955.80px;font-size:24px;line-height:24px;color:#8b8b8b;">30</span>
<span class="t" style="left:393.65px;top:3062.60px;font-size:24px;line-height:24px;color:#8b8b8b;">15</span>
<span class="t" style="left:407.00px;top:3168.80px;font-size:24px;line-height:24px;color:#8b8b8b;">0</span>
<span class="t" style="left:783.30px;top:3339.60px;font-size:24px;line-height:24px;color:#4a4e57;letter-spacing:0.074px;">01 Jan 2025 - 30 Jan 2025</span>
<div style="left:1490px;top:2532px;width:1126px;height:892px;border:2px solid #e6e6e6;border-radius:12px;background:#fff;"></div>
<span class="t" style="left:1530.50px;top:2587.80px;font-size:31.5px;line-height:31.5px;color:#1a1d29;font-weight:700;letter-spacing:-0.344px;">Room Revenue by Channel</span>
<span class="t" style="left:1531.00px;top:2675.00px;font-size:25.5px;line-height:25.5px;color:#2a2e39;letter-spacing:0.512px;">Total (room revenue):</span>
<span class="t" style="left:1792.70px;top:2673.20px;font-size:27.5px;line-height:27.5px;color:#1a1d29;font-weight:700;letter-spacing:1.177px;">25,000</span>
<svg style="left:1526px;top:2730px;" width="1080" height="660" viewBox="380 2730 1080 660"><path d="M431.4 2751.2 H1427.2" stroke="#e4e4e4" stroke-width="2" stroke-dasharray="4 4.500" fill="none"/><path d="M431.4 2859.0 H1427.2" stroke="#e4e4e4" stroke-width="2" stroke-dasharray="4 4.500" fill="none"/><path d="M431.4 2966.8 H1427.2" stroke="#e4e4e4" stroke-width="2" stroke-dasharray="4 4.500" fill="none"/><path d="M431.4 3074.6 H1427.2" stroke="#e4e4e4" stroke-width="2" stroke-dasharray="4 4.500" fill="none"/><path d="M431.4 2751.2 V3182.4" stroke="#e4e4e4" stroke-width="2" stroke-dasharray="4 4.500" fill="none"/><path d="M573.7 2751.2 V3182.4" stroke="#e4e4e4" stroke-width="2" stroke-dasharray="4 4.500" fill="none"/><path d="M715.9 2751.2 V3182.4" stroke="#e4e4e4" stroke-width="2" stroke-dasharray="4 4.500" fill="none"/><path d="M858.2 2751.2 V3182.4" stroke="#e4e4e4" stroke-width="2" stroke-dasharray="4 4.500" fill="none"/><path d="M1000.4 2751.2 V3182.4" stroke="#e4e4e4" stroke-width="2" stroke-dasharray="4 4.500" fill="none"/><path d="M1142.7 2751.2 V3182.4" stroke="#e4e4e4" stroke-width="2" stroke-dasharray="4 4.500" fill="none"/><path d="M1284.9 2751.2 V3182.4" stroke="#e4e4e4" stroke-width="2" stroke-dasharray="4 4.500" fill="none"/><path d="M1427.2 2751.2 V3182.4" stroke="#e4e4e4" stroke-width="2" stroke-dasharray="4 4.500" fill="none"/><path d="M430.4 3183.0 H1429.2" stroke="#dedede" stroke-width="2.400" fill="none"/><path d="M456.5 3182.4 V2973.7 Q456.5 2967.2 463.0 2967.2 H539.4 Q545.9 2967.2 545.9 2973.7 V3182.4 Z" fill="#a383e0"/><path d="M599.3 3182.4 V2875.4 Q599.3 2868.9 605.8 2868.9 H682.2 Q688.7 2868.9 688.7 2875.4 V3182.4 Z" fill="#8dd9a9"/><path d="M742.1 3182.4 V2789.3 Q742.1 2782.8 748.6 2782.8 H825.0 Q831.5 2782.8 831.5 2789.3 V3182.4 Z" fill="#7595f0"/><path d="M884.9 3180.4 V2851.5 Q884.9 2845.0 891.4 2845.0 H967.8 Q974.3 2845.0 974.3 2851.5 V3180.4 Z" fill="#fdbb6b"/><path d="M1027.7 3180.4 V2780.0 Q1027.7 2773.5 1034.2 2773.5 H1110.6 Q1117.1 2773.5 1117.1 2780.0 V3180.4 Z" fill="#62cde4"/><path d="M1170.5 3180.4 V2966.3 Q1170.5 2959.8 1177.0 2959.8 H1253.4 Q1259.9 2959.8 1259.9 2966.3 V3180.4 Z" fill="#fea69f"/><path d="M1313.3 3180.4 V2953.6 Q1313.3 2947.1 1319.8 2947.1 H1396.2 Q1402.7 2947.1 1402.7 2953.6 V3180.4 Z" fill="#a194fc"/><path d="M501.30 3025.00 C565.58 3011.51 579.87 2825.20 644.15 2825.20 C708.43 2825.20 722.72 2931.24 787.00 2953.80 C851.28 2976.36 865.57 3103.70 929.85 3103.70 C994.13 3103.70 1008.42 2981.65 1072.70 2975.30 C1136.98 2968.95 1151.27 2961.20 1215.55 2961.20 C1279.83 2961.20 1294.12 3020.69 1358.40 3025.00" fill="none" stroke="#ee5a48" stroke-width="2.200"/><circle cx="501.3" cy="3025.0" r="7" fill="#f0574a" stroke="#fff" stroke-width="2.200"/><circle cx="644.1" cy="2825.2" r="7" fill="#f0574a" stroke="#fff" stroke-width="2.200"/><circle cx="787.0" cy="2953.8" r="7" fill="#f0574a" stroke="#fff" stroke-width="2.200"/><circle cx="929.8" cy="3103.7" r="7" fill="#f0574a" stroke="#fff" stroke-width="2.200"/><circle cx="1072.7" cy="2975.3" r="7" fill="#f0574a" stroke="#fff" stroke-width="2.200"/><circle cx="1215.5" cy="2961.2" r="7" fill="#f0574a" stroke="#fff" stroke-width="2.200"/><circle cx="1358.4" cy="3025.0" r="7" fill="#f0574a" stroke="#fff" stroke-width="2.200"/><text transform="translate(540.4 3217.2) rotate(-45)" text-anchor="end" font-size="23.500" fill="#8b8b8b" font-family='"Liberation Sans", sans-serif' textLength="91.2" lengthAdjust="spacing">Double...</text><text transform="translate(681.2 3219.4) rotate(-45)" text-anchor="end" font-size="23.500" fill="#8b8b8b" font-family='"Liberation Sans", sans-serif' textLength="78.4" lengthAdjust="spacing">Delux...</text><text transform="translate(823.7 3219.4) rotate(-45)" text-anchor="end" font-size="23.500" fill="#8b8b8b" font-family='"Liberation Sans", sans-serif' textLength="78.6" lengthAdjust="spacing">Delux...</text><text transform="translate(968.0 3213.5) rotate(-45)" text-anchor="end" font-size="23.500" fill="#8b8b8b" font-family='"Liberation Sans", sans-serif' textLength="93.0" lengthAdjust="spacing">Standa...</text><text transform="translate(1102.6 3212.0) rotate(-45)" text-anchor="end" font-size="23.500" fill="#8b8b8b" font-family='"Liberation Sans", sans-serif' textLength="72.4" lengthAdjust="spacing">Suns...</text><text transform="translate(1250.3 3213.5) rotate(-45)" text-anchor="end" font-size="23.500" fill="#8b8b8b" font-family='"Liberation Sans", sans-serif' textLength="86.8" lengthAdjust="spacing">Superi...</text><text transform="translate(1382.6 3213.5) rotate(-45)" text-anchor="end" font-size="23.500" fill="#8b8b8b" font-family='"Liberation Sans", sans-serif' textLength="57.4" lengthAdjust="spacing">Dor...</text><path d="M742 3352 H750 M766 3352 H774" stroke="#f0574a" stroke-width="4" fill="none"/><circle cx="758" cy="3351.800" r="6.300" fill="#f0574a"/></svg>
<span class="t" style="left:1539.65px;top:2744.30px;font-size:24px;line-height:24px;color:#8b8b8b;">60</span>
<span class="t" style="left:1539.65px;top:2850.00px;font-size:24px;line-height:24px;color:#8b8b8b;">45</span>
<span class="t" style="left:1539.65px;top:2955.80px;font-size:24px;line-height:24px;color:#8b8b8b;">30</span>
<span class="t" style="left:1539.65px;top:3062.60px;font-size:24px;line-height:24px;color:#8b8b8b;">15</span>
<span class="t" style="left:1553.00px;top:3168.80px;font-size:24px;line-height:24px;color:#8b8b8b;">0</span>
<span class="t" style="left:1929.30px;top:3339.60px;font-size:24px;line-height:24px;color:#4a4e57;letter-spacing:0.074px;">01 Jan 2025 - 30 Jan 2025</span>
<div style="left:344px;top:3504px;width:2272px;height:960px;border:2px solid #e6e6e6;border-radius:12px;background:#fff;"></div>
<span class="t" style="left:385.50px;top:3559.80px;font-size:31.5px;line-height:31.5px;color:#1a1d29;font-weight:700;letter-spacing:-0.334px;">Trend by channel</span>
<div style="left:384px;top:3640px;width:460px;height:72px;border:2px solid #9fb4f3;border-radius:8px;background:#fff;"></div>
<div style="left:390px;top:3646px;width:214px;height:60px;background:#e8ecfc;border-radius:5px;"></div>
<span class="t" style="left:414.00px;top:3664.10px;font-size:26.5px;line-height:26.5px;color:#060f9e;font-weight:700;letter-spacing:0.251px;">Room nights</span>
<span class="t" style="left:631.00px;top:3664.10px;font-size:26.5px;line-height:26.5px;color:#8d8d8d;letter-spacing:0.720px;">Room revenue</span>
<div style="left:860px;top:3640px;width:640px;height:72px;border:2px solid #e2e2e2;border-radius:8px;background:#fff;"></div>
<span class="t" style="left:882.70px;top:3663.10px;font-size:27.5px;line-height:27.5px;color:#1c1f2b;letter-spacing:0.721px;">Daily breakdown</span>
<svg style="left:1451px;top:3665px;" width="28" height="22" viewBox="0 0 28 22"><path d="M5.500 5.600 L14.600 14.700 L23.700 5.600" fill="none" stroke="#2a2d36" stroke-width="3.400" stroke-linecap="round" stroke-linejoin="round"/></svg>
<span class="t" style="left:384.50px;top:3759.20px;font-size:25.5px;line-height:25.5px;color:#2a2e39;letter-spacing:0.807px;">Total (room nights):</span>
<span class="t" style="left:626.60px;top:3757.20px;font-size:27.5px;line-height:27.5px;color:#1a1d29;font-weight:700;letter-spacing:1.906px;">140</span>
<svg style="left:380px;top:3820px;" width="2200" height="600" viewBox="380 3820 2200 600"><defs><linearGradient id="tg0" gradientUnits="userSpaceOnUse" x1="0" y1="3865" x2="0" y2="4080"><stop offset="0" stop-color="#8f62d4" stop-opacity="0.34"/><stop offset="1" stop-color="#8f62d4" stop-opacity="0.04"/></linearGradient><linearGradient id="tg1" gradientUnits="userSpaceOnUse" x1="0" y1="3925" x2="0" y2="4118"><stop offset="0" stop-color="#6fcf97" stop-opacity="0.34"/><stop offset="1" stop-color="#6fcf97" stop-opacity="0.04"/></linearGradient><linearGradient id="tg2" gradientUnits="userSpaceOnUse" x1="0" y1="3948" x2="0" y2="4142"><stop offset="0" stop-color="#4f74e3" stop-opacity="0.34"/><stop offset="1" stop-color="#4f74e3" stop-opacity="0.04"/></linearGradient><linearGradient id="tg3" gradientUnits="userSpaceOnUse" x1="0" y1="4021" x2="0" y2="4204"><stop offset="0" stop-color="#f8a947" stop-opacity="0.34"/><stop offset="1" stop-color="#f8a947" stop-opacity="0.04"/></linearGradient><linearGradient id="tg4" gradientUnits="userSpaceOnUse" x1="0" y1="4100" x2="0" y2="4251"><stop offset="0" stop-color="#3fbfd8" stop-opacity="0.36"/><stop offset="1" stop-color="#3fbfd8" stop-opacity="0.1"/></linearGradient><linearGradient id="tg5" gradientUnits="userSpaceOnUse" x1="0" y1="4161" x2="0" y2="4271"><stop offset="0" stop-color="#f3877e" stop-opacity="0.34"/><stop offset="1" stop-color="#f3877e" stop-opacity="0.04"/></linearGradient><linearGradient id="tg6" gradientUnits="userSpaceOnUse" x1="0" y1="4213" x2="0" y2="4295"><stop offset="0" stop-color="#8a6cf4" stop-opacity="0.34"/><stop offset="1" stop-color="#8a6cf4" stop-opacity="0.04"/></linearGradient></defs><path d="M445.0 3834.8 H2557.2" stroke="#e4e4e4" stroke-width="2" stroke-dasharray="4 4.500" fill="none"/><path d="M445.0 3949.8 H2557.2" stroke="#e4e4e4" stroke-width="2" stroke-dasharray="4 4.500" fill="none"/><path d="M445.0 4064.8 H2557.2" stroke="#e4e4e4" stroke-width="2" stroke-dasharray="4 4.500" fill="none"/><path d="M445.0 4179.8 H2557.2" stroke="#e4e4e4" stroke-width="2" stroke-dasharray="4 4.500" fill="none"/><path d="M445.0 3834.8 V4294.8" stroke="#e4e4e4" stroke-width="2" stroke-dasharray="4 4.500" fill="none"/><path d="M585.8 3834.8 V4294.8" stroke="#e4e4e4" stroke-width="2" stroke-dasharray="4 4.500" fill="none"/><path d="M726.6 3834.8 V4294.8" stroke="#e4e4e4" stroke-width="2" stroke-dasharray="4 4.500" fill="none"/><path d="M867.4 3834.8 V4294.8" stroke="#e4e4e4" stroke-width="2" stroke-dasharray="4 4.500" fill="none"/><path d="M1008.3 3834.8 V4294.8" stroke="#e4e4e4" stroke-width="2" stroke-dasharray="4 4.500" fill="none"/><path d="M1149.1 3834.8 V4294.8" stroke="#e4e4e4" stroke-width="2" stroke-dasharray="4 4.500" fill="none"/><path d="M1289.9 3834.8 V4294.8" stroke="#e4e4e4" stroke-width="2" stroke-dasharray="4 4.500" fill="none"/><path d="M1430.7 3834.8 V4294.8" stroke="#e4e4e4" stroke-width="2" stroke-dasharray="4 4.500" fill="none"/><path d="M1571.5 3834.8 V4294.8" stroke="#e4e4e4" stroke-width="2" stroke-dasharray="4 4.500" fill="none"/><path d="M1712.3 3834.8 V4294.8" stroke="#e4e4e4" stroke-width="2" stroke-dasharray="4 4.500" fill="none"/><path d="M1853.1 3834.8 V4294.8" stroke="#e4e4e4" stroke-width="2" stroke-dasharray="4 4.500" fill="none"/><path d="M1993.9 3834.8 V4294.8" stroke="#e4e4e4" stroke-width="2" stroke-dasharray="4 4.500" fill="none"/><path d="M2134.8 3834.8 V4294.8" stroke="#e4e4e4" stroke-width="2" stroke-dasharray="4 4.500" fill="none"/><path d="M2275.6 3834.8 V4294.8" stroke="#e4e4e4" stroke-width="2" stroke-dasharray="4 4.500" fill="none"/><path d="M2416.4 3834.8 V4294.8" stroke="#e4e4e4" stroke-width="2" stroke-dasharray="4 4.500" fill="none"/><path d="M2557.2 3834.8 V4294.8" stroke="#e4e4e4" stroke-width="2" stroke-dasharray="4 4.500" fill="none"/><path d="M445.0 3971.5C520.4 3971.5 520.4 4024.2 595.9 4024.2C671.3 4024.2 671.3 3976.6 746.7 3976.6C822.2 3976.6 822.2 3985.5 897.6 3985.5C973.0 3985.5 973.0 3950.0 1048.5 3950.0C1123.9 3950.0 1123.9 3994.1 1199.4 3994.1C1274.8 3994.1 1274.8 4024.2 1350.2 4024.2C1425.7 4024.2 1425.7 4059.8 1501.1 4059.8C1576.5 4059.8 1576.5 3992.6 1652.0 3992.6C1727.4 3992.6 1727.4 4038.7 1802.8 4038.7C1878.3 4038.7 1878.3 3967.6 1953.7 3967.6C2029.1 3967.6 2029.1 3980.0 2104.6 3980.0C2180.0 3980.0 2180.0 3980.5 2255.5 3980.5C2330.9 3980.5 2330.9 3864.9 2406.3 3864.9C2481.8 3864.9 2481.8 3976.3 2557.2 3976.3L2557.2 4002.8C2481.8 4002.8 2481.8 3924.7 2406.3 3924.7C2330.9 3924.7 2330.9 4045.8 2255.5 4045.8C2180.0 4045.8 2180.0 4033.8 2104.6 4033.8C2029.1 4033.8 2029.1 4003.9 1953.7 4003.9C1878.3 4003.9 1878.3 4067.2 1802.8 4067.2C1727.4 4067.2 1727.4 4045.7 1652.0 4045.7C1576.5 4045.7 1576.5 4068.0 1501.1 4068.0C1425.7 4068.0 1425.7 4046.5 1350.2 4046.5C1274.8 4046.5 1274.8 4035.9 1199.4 4035.9C1123.9 4035.9 1123.9 3962.9 1048.5 3962.9C973.0 3962.9 973.0 4055.9 897.6 4055.9C822.2 4055.9 822.2 4016.8 746.7 4016.8C671.3 4016.8 671.3 4079.7 595.9 4079.7C520.4 4079.7 520.4 3995.7 445.0 3995.7Z" fill="url(#tg0)"/><path d="M445.0 3995.7C520.4 3995.7 520.4 4079.7 595.9 4079.7C671.3 4079.7 671.3 4016.8 746.7 4016.8C822.2 4016.8 822.2 4055.9 897.6 4055.9C973.0 4055.9 973.0 3962.9 1048.5 3962.9C1123.9 3962.9 1123.9 4035.9 1199.4 4035.9C1274.8 4035.9 1274.8 4046.5 1350.2 4046.5C1425.7 4046.5 1425.7 4068.0 1501.1 4068.0C1576.5 4068.0 1576.5 4045.7 1652.0 4045.7C1727.4 4045.7 1727.4 4067.2 1802.8 4067.2C1878.3 4067.2 1878.3 4003.9 1953.7 4003.9C2029.1 4003.9 2029.1 4033.8 2104.6 4033.8C2180.0 4033.8 2180.0 4045.8 2255.5 4045.8C2330.9 4045.8 2330.9 3924.7 2406.3 3924.7C2481.8 3924.7 2481.8 4002.8 2557.2 4002.8L2557.2 4030.9C2481.8 4030.9 2481.8 3948.5 2406.3 3948.5C2330.9 3948.5 2330.9 4117.7 2255.5 4117.7C2180.0 4117.7 2180.0 4075.8 2104.6 4075.8C2029.1 4075.8 2029.1 4053.9 1953.7 4053.9C1878.3 4053.9 1878.3 4110.5 1802.8 4110.5C1727.4 4110.5 1727.4 4081.3 1652.0 4081.3C1576.5 4081.3 1576.5 4104.3 1501.1 4104.3C1425.7 4104.3 1425.7 4089.0 1350.2 4089.0C1274.8 4089.0 1274.8 4048.4 1199.4 4048.4C1123.9 4048.4 1123.9 4012.9 1048.5 4012.9C973.0 4012.9 973.0 4090.2 897.6 4090.2C822.2 4090.2 822.2 4029.7 746.7 4029.7C671.3 4029.7 671.3 4105.5 595.9 4105.5C520.4 4105.5 520.4 4052.0 445.0 4052.0Z" fill="url(#tg1)"/><path d="M445.0 4052.0C520.4 4052.0 520.4 4105.5 595.9 4105.5C671.3 4105.5 671.3 4029.7 746.7 4029.7C822.2 4029.7 822.2 4090.2 897.6 4090.2C973.0 4090.2 973.0 4012.9 1048.5 4012.9C1123.9 4012.9 1123.9 4048.4 1199.4 4048.4C1274.8 4048.4 1274.8 4089.0 1350.2 4089.0C1425.7 4089.0 1425.7 4104.3 1501.1 4104.3C1576.5 4104.3 1576.5 4081.3 1652.0 4081.3C1727.4 4081.3 1727.4 4110.5 1802.8 4110.5C1878.3 4110.5 1878.3 4053.9 1953.7 4053.9C2029.1 4053.9 2029.1 4075.8 2104.6 4075.8C2180.0 4075.8 2180.0 4117.7 2255.5 4117.7C2330.9 4117.7 2330.9 3948.5 2406.3 3948.5C2481.8 3948.5 2481.8 4030.9 2557.2 4030.9L2557.2 4104.0C2481.8 4104.0 2481.8 4020.8 2406.3 4020.8C2330.9 4020.8 2330.9 4137.2 2255.5 4137.2C2180.0 4137.2 2180.0 4090.0 2104.6 4090.0C2029.1 4090.0 2029.1 4111.3 1953.7 4111.3C1878.3 4111.3 1878.3 4130.5 1802.8 4130.5C1727.4 4130.5 1727.4 4132.8 1652.0 4132.8C1576.5 4132.8 1576.5 4137.9 1501.1 4137.9C1425.7 4137.9 1425.7 4116.0 1350.2 4116.0C1274.8 4116.0 1274.8 4114.8 1199.4 4114.8C1123.9 4114.8 1123.9 4065.6 1048.5 4065.6C973.0 4065.6 973.0 4142.2 897.6 4142.2C822.2 4142.2 822.2 4048.4 746.7 4048.4C671.3 4048.4 671.3 4127.3 595.9 4127.3C520.4 4127.3 520.4 4098.4 445.0 4098.4Z" fill="url(#tg2)"/><path d="M445.0 4098.4C520.4 4098.4 520.4 4127.3 595.9 4127.3C671.3 4127.3 671.3 4048.4 746.7 4048.4C822.2 4048.4 822.2 4142.2 897.6 4142.2C973.0 4142.2 973.0 4065.6 1048.5 4065.6C1123.9 4065.6 1123.9 4114.8 1199.4 4114.8C1274.8 4114.8 1274.8 4116.0 1350.2 4116.0C1425.7 4116.0 1425.7 4137.9 1501.1 4137.9C1576.5 4137.9 1576.5 4132.8 1652.0 4132.8C1727.4 4132.8 1727.4 4130.5 1802.8 4130.5C1878.3 4130.5 1878.3 4111.3 1953.7 4111.3C2029.1 4111.3 2029.1 4090.0 2104.6 4090.0C2180.0 4090.0 2180.0 4137.2 2255.5 4137.2C2330.9 4137.2 2330.9 4020.8 2406.3 4020.8C2481.8 4020.8 2481.8 4104.0 2557.2 4104.0L2557.2 4124.3C2481.8 4124.3 2481.8 4100.1 2406.3 4100.1C2330.9 4100.1 2330.9 4152.8 2255.5 4152.8C2180.0 4152.8 2180.0 4105.0 2104.6 4105.0C2029.1 4105.0 2029.1 4124.2 1953.7 4124.2C1878.3 4124.2 1878.3 4195.3 1802.8 4195.3C1727.4 4195.3 1727.4 4146.5 1652.0 4146.5C1576.5 4146.5 1576.5 4203.9 1501.1 4203.9C1425.7 4203.9 1425.7 4176.2 1350.2 4176.2C1274.8 4176.2 1274.8 4176.2 1199.4 4176.2C1123.9 4176.2 1123.9 4144.9 1048.5 4144.9C973.0 4144.9 973.0 4155.9 897.6 4155.9C822.2 4155.9 822.2 4103.9 746.7 4103.9C671.3 4103.9 671.3 4139.0 595.9 4139.0C520.4 4139.0 520.4 4175.8 445.0 4175.8Z" fill="url(#tg3)"/><path d="M445.0 4175.8C520.4 4175.8 520.4 4139.0 595.9 4139.0C671.3 4139.0 671.3 4103.9 746.7 4103.9C822.2 4103.9 822.2 4155.9 897.6 4155.9C973.0 4155.9 973.0 4144.9 1048.5 4144.9C1123.9 4144.9 1123.9 4176.2 1199.4 4176.2C1274.8 4176.2 1274.8 4176.2 1350.2 4176.2C1425.7 4176.2 1425.7 4203.9 1501.1 4203.9C1576.5 4203.9 1576.5 4146.5 1652.0 4146.5C1727.4 4146.5 1727.4 4195.3 1802.8 4195.3C1878.3 4195.3 1878.3 4124.2 1953.7 4124.2C2029.1 4124.2 2029.1 4105.0 2104.6 4105.0C2180.0 4105.0 2180.0 4152.8 2255.5 4152.8C2330.9 4152.8 2330.9 4100.1 2406.3 4100.1C2481.8 4100.1 2481.8 4124.3 2557.2 4124.3L2557.2 4185.2C2481.8 4185.2 2481.8 4175.5 2406.3 4175.5C2330.9 4175.5 2330.9 4180.2 2255.5 4180.2C2180.0 4180.2 2180.0 4169.8 2104.6 4169.8C2029.1 4169.8 2029.1 4160.9 1953.7 4160.9C1878.3 4160.9 1878.3 4241.8 1802.8 4241.8C1727.4 4241.8 1727.4 4180.5 1652.0 4180.5C1576.5 4180.5 1576.5 4221.1 1501.1 4221.1C1425.7 4221.1 1425.7 4251.2 1350.2 4251.2C1274.8 4251.2 1274.8 4238.3 1199.4 4238.3C1123.9 4238.3 1123.9 4203.9 1048.5 4203.9C973.0 4203.9 973.0 4166.0 897.6 4166.0C822.2 4166.0 822.2 4170.3 746.7 4170.3C671.3 4170.3 671.3 4195.0 595.9 4195.0C520.4 4195.0 520.4 4209.8 445.0 4209.8Z" fill="url(#tg4)"/><path d="M445.0 4209.8C520.4 4209.8 520.4 4195.0 595.9 4195.0C671.3 4195.0 671.3 4170.3 746.7 4170.3C822.2 4170.3 822.2 4166.0 897.6 4166.0C973.0 4166.0 973.0 4203.9 1048.5 4203.9C1123.9 4203.9 1123.9 4238.3 1199.4 4238.3C1274.8 4238.3 1274.8 4251.2 1350.2 4251.2C1425.7 4251.2 1425.7 4221.1 1501.1 4221.1C1576.5 4221.1 1576.5 4180.5 1652.0 4180.5C1727.4 4180.5 1727.4 4241.8 1802.8 4241.8C1878.3 4241.8 1878.3 4160.9 1953.7 4160.9C2029.1 4160.9 2029.1 4169.8 2104.6 4169.8C2180.0 4169.8 2180.0 4180.2 2255.5 4180.2C2330.9 4180.2 2330.9 4175.5 2406.3 4175.5C2481.8 4175.5 2481.8 4185.2 2557.2 4185.2L2557.2 4243.8C2481.8 4243.8 2481.8 4218.8 2406.3 4218.8C2330.9 4218.8 2330.9 4254.4 2255.5 4254.4C2180.0 4254.4 2180.0 4213.0 2104.6 4213.0C2029.1 4213.0 2029.1 4216.4 1953.7 4216.4C1878.3 4216.4 1878.3 4269.5 1802.8 4269.5C1727.4 4269.5 1727.4 4224.6 1652.0 4224.6C1576.5 4224.6 1576.5 4270.7 1501.1 4270.7C1425.7 4270.7 1425.7 4268.4 1350.2 4268.4C1274.8 4268.4 1274.8 4262.9 1199.4 4262.9C1123.9 4262.9 1123.9 4239.0 1048.5 4239.0C973.0 4239.0 973.0 4228.9 897.6 4228.9C822.2 4228.9 822.2 4239.0 746.7 4239.0C671.3 4239.0 671.3 4266.8 595.9 4266.8C520.4 4266.8 520.4 4257.0 445.0 4257.0Z" fill="url(#tg5)"/><path d="M445.0 4257.0C520.4 4257.0 520.4 4266.8 595.9 4266.8C671.3 4266.8 671.3 4239.0 746.7 4239.0C822.2 4239.0 822.2 4228.9 897.6 4228.9C973.0 4228.9 973.0 4239.0 1048.5 4239.0C1123.9 4239.0 1123.9 4262.9 1199.4 4262.9C1274.8 4262.9 1274.8 4268.4 1350.2 4268.4C1425.7 4268.4 1425.7 4270.7 1501.1 4270.7C1576.5 4270.7 1576.5 4224.6 1652.0 4224.6C1727.4 4224.6 1727.4 4269.5 1802.8 4269.5C1878.3 4269.5 1878.3 4216.4 1953.7 4216.4C2029.1 4216.4 2029.1 4213.0 2104.6 4213.0C2180.0 4213.0 2180.0 4254.4 2255.5 4254.4C2330.9 4254.4 2330.9 4218.8 2406.3 4218.8C2481.8 4218.8 2481.8 4243.8 2557.2 4243.8L2557.2 4294.8L445.0 4294.8Z" fill="url(#tg6)"/><path d="M445.0 3971.5C520.4 3971.5 520.4 4024.2 595.9 4024.2C671.3 4024.2 671.3 3976.6 746.7 3976.6C822.2 3976.6 822.2 3985.5 897.6 3985.5C973.0 3985.5 973.0 3950.0 1048.5 3950.0C1123.9 3950.0 1123.9 3994.1 1199.4 3994.1C1274.8 3994.1 1274.8 4024.2 1350.2 4024.2C1425.7 4024.2 1425.7 4059.8 1501.1 4059.8C1576.5 4059.8 1576.5 3992.6 1652.0 3992.6C1727.4 3992.6 1727.4 4038.7 1802.8 4038.7C1878.3 4038.7 1878.3 3967.6 1953.7 3967.6C2029.1 3967.6 2029.1 3980.0 2104.6 3980.0C2180.0 3980.0 2180.0 3980.5 2255.5 3980.5C2330.9 3980.5 2330.9 3864.9 2406.3 3864.9C2481.8 3864.9 2481.8 3976.3 2557.2 3976.3" fill="none" stroke="#8f62d4" stroke-width="2"/><path d="M445.0 3995.7C520.4 3995.7 520.4 4079.7 595.9 4079.7C671.3 4079.7 671.3 4016.8 746.7 4016.8C822.2 4016.8 822.2 4055.9 897.6 4055.9C973.0 4055.9 973.0 3962.9 1048.5 3962.9C1123.9 3962.9 1123.9 4035.9 1199.4 4035.9C1274.8 4035.9 1274.8 4046.5 1350.2 4046.5C1425.7 4046.5 1425.7 4068.0 1501.1 4068.0C1576.5 4068.0 1576.5 4045.7 1652.0 4045.7C1727.4 4045.7 1727.4 4067.2 1802.8 4067.2C1878.3 4067.2 1878.3 4003.9 1953.7 4003.9C2029.1 4003.9 2029.1 4033.8 2104.6 4033.8C2180.0 4033.8 2180.0 4045.8 2255.5 4045.8C2330.9 4045.8 2330.9 3924.7 2406.3 3924.7C2481.8 3924.7 2481.8 4002.8 2557.2 4002.8" fill="none" stroke="#6fcf97" stroke-width="2"/><path d="M445.0 4052.0C520.4 4052.0 520.4 4105.5 595.9 4105.5C671.3 4105.5 671.3 4029.7 746.7 4029.7C822.2 4029.7 822.2 4090.2 897.6 4090.2C973.0 4090.2 973.0 4012.9 1048.5 4012.9C1123.9 4012.9 1123.9 4048.4 1199.4 4048.4C1274.8 4048.4 1274.8 4089.0 1350.2 4089.0C1425.7 4089.0 1425.7 4104.3 1501.1 4104.3C1576.5 4104.3 1576.5 4081.3 1652.0 4081.3C1727.4 4081.3 1727.4 4110.5 1802.8 4110.5C1878.3 4110.5 1878.3 4053.9 1953.7 4053.9C2029.1 4053.9 2029.1 4075.8 2104.6 4075.8C2180.0 4075.8 2180.0 4117.7 2255.5 4117.7C2330.9 4117.7 2330.9 3948.5 2406.3 3948.5C2481.8 3948.5 2481.8 4030.9 2557.2 4030.9" fill="none" stroke="#4f74e3" stroke-width="2"/><path d="M445.0 4098.4C520.4 4098.4 520.4 4127.3 595.9 4127.3C671.3 4127.3 671.3 4048.4 746.7 4048.4C822.2 4048.4 822.2 4142.2 897.6 4142.2C973.0 4142.2 973.0 4065.6 1048.5 4065.6C1123.9 4065.6 1123.9 4114.8 1199.4 4114.8C1274.8 4114.8 1274.8 4116.0 1350.2 4116.0C1425.7 4116.0 1425.7 4137.9 1501.1 4137.9C1576.5 4137.9 1576.5 4132.8 1652.0 4132.8C1727.4 4132.8 1727.4 4130.5 1802.8 4130.5C1878.3 4130.5 1878.3 4111.3 1953.7 4111.3C2029.1 4111.3 2029.1 4090.0 2104.6 4090.0C2180.0 4090.0 2180.0 4137.2 2255.5 4137.2C2330.9 4137.2 2330.9 4020.8 2406.3 4020.8C2481.8 4020.8 2481.8 4104.0 2557.2 4104.0" fill="none" stroke="#f8a947" stroke-width="2"/><path d="M445.0 4175.8C520.4 4175.8 520.4 4139.0 595.9 4139.0C671.3 4139.0 671.3 4103.9 746.7 4103.9C822.2 4103.9 822.2 4155.9 897.6 4155.9C973.0 4155.9 973.0 4144.9 1048.5 4144.9C1123.9 4144.9 1123.9 4176.2 1199.4 4176.2C1274.8 4176.2 1274.8 4176.2 1350.2 4176.2C1425.7 4176.2 1425.7 4203.9 1501.1 4203.9C1576.5 4203.9 1576.5 4146.5 1652.0 4146.5C1727.4 4146.5 1727.4 4195.3 1802.8 4195.3C1878.3 4195.3 1878.3 4124.2 1953.7 4124.2C2029.1 4124.2 2029.1 4105.0 2104.6 4105.0C2180.0 4105.0 2180.0 4152.8 2255.5 4152.8C2330.9 4152.8 2330.9 4100.1 2406.3 4100.1C2481.8 4100.1 2481.8 4124.3 2557.2 4124.3" fill="none" stroke="#3fbfd8" stroke-width="2"/><path d="M445.0 4209.8C520.4 4209.8 520.4 4195.0 595.9 4195.0C671.3 4195.0 671.3 4170.3 746.7 4170.3C822.2 4170.3 822.2 4166.0 897.6 4166.0C973.0 4166.0 973.0 4203.9 1048.5 4203.9C1123.9 4203.9 1123.9 4238.3 1199.4 4238.3C1274.8 4238.3 1274.8 4251.2 1350.2 4251.2C1425.7 4251.2 1425.7 4221.1 1501.1 4221.1C1576.5 4221.1 1576.5 4180.5 1652.0 4180.5C1727.4 4180.5 1727.4 4241.8 1802.8 4241.8C1878.3 4241.8 1878.3 4160.9 1953.7 4160.9C2029.1 4160.9 2029.1 4169.8 2104.6 4169.8C2180.0 4169.8 2180.0 4180.2 2255.5 4180.2C2330.9 4180.2 2330.9 4175.5 2406.3 4175.5C2481.8 4175.5 2481.8 4185.2 2557.2 4185.2" fill="none" stroke="#f3877e" stroke-width="2"/><path d="M445.0 4257.0C520.4 4257.0 520.4 4266.8 595.9 4266.8C671.3 4266.8 671.3 4239.0 746.7 4239.0C822.2 4239.0 822.2 4228.9 897.6 4228.9C973.0 4228.9 973.0 4239.0 1048.5 4239.0C1123.9 4239.0 1123.9 4262.9 1199.4 4262.9C1274.8 4262.9 1274.8 4268.4 1350.2 4268.4C1425.7 4268.4 1425.7 4270.7 1501.1 4270.7C1576.5 4270.7 1576.5 4224.6 1652.0 4224.6C1727.4 4224.6 1727.4 4269.5 1802.8 4269.5C1878.3 4269.5 1878.3 4216.4 1953.7 4216.4C2029.1 4216.4 2029.1 4213.0 2104.6 4213.0C2180.0 4213.0 2180.0 4254.4 2255.5 4254.4C2330.9 4254.4 2330.9 4218.8 2406.3 4218.8C2481.8 4218.8 2481.8 4243.8 2557.2 4243.8" fill="none" stroke="#8a6cf4" stroke-width="2"/><path d="M444.0 4294.8 H2558.2" stroke="#b9b9b9" stroke-width="2.400" fill="none"/><path d="M669.3 4391.600 H700.8" stroke="#9065d6" stroke-width="4" fill="none"/><path d="M903.4 4391.600 H934.9" stroke="#74d19b" stroke-width="4" fill="none"/><path d="M1137.5 4391.600 H1169.0" stroke="#5b7fe8" stroke-width="4" fill="none"/><path d="M1371.6 4391.600 H1403.1" stroke="#f9ae4f" stroke-width="4" fill="none"/><path d="M1605.7 4391.600 H1637.2" stroke="#4dc4dc" stroke-width="4" fill="none"/><path d="M1839.8 4391.600 H1871.3" stroke="#f79c92" stroke-width="4" fill="none"/><path d="M2073.9 4391.600 H2105.4" stroke="#8f7cf5" stroke-width="4" fill="none"/></svg>
<span class="t" style="left:394.30px;top:3827.90px;font-size:24px;line-height:24px;color:#8b8b8b;">200</span>
<span class="t" style="left:394.30px;top:3941.20px;font-size:24px;line-height:24px;color:#8b8b8b;">150</span>
<span class="t" style="left:394.30px;top:4053.60px;font-size:24px;line-height:24px;color:#8b8b8b;">100</span>
<span class="t" style="left:407.65px;top:4167.00px;font-size:24px;line-height:24px;color:#8b8b8b;">50</span>
<span class="t" style="left:421.00px;top:4279.60px;font-size:24px;line-height:24px;color:#8b8b8b;">0</span>
<span class="t" style="left:489.62px;top:4308.40px;font-size:22px;line-height:22px;color:#8b8b8b;">1 Jan</span>
<span class="t" style="left:630.93px;top:4308.40px;font-size:22px;line-height:22px;color:#8b8b8b;">3 Jan</span>
<span class="t" style="left:771.74px;top:4308.40px;font-size:22px;line-height:22px;color:#8b8b8b;">5 Jan</span>
<span class="t" style="left:912.06px;top:4308.40px;font-size:22px;line-height:22px;color:#8b8b8b;">7 Jan</span>
<span class="t" style="left:1052.87px;top:4308.40px;font-size:22px;line-height:22px;color:#8b8b8b;">9 Jan</span>
<span class="t" style="left:1188.38px;top:4308.40px;font-size:22px;line-height:22px;color:#8b8b8b;">11 Jan</span>
<span class="t" style="left:1328.38px;top:4308.40px;font-size:22px;line-height:22px;color:#8b8b8b;">13 Jan</span>
<span class="t" style="left:1469.19px;top:4308.40px;font-size:22px;line-height:22px;color:#8b8b8b;">15 Jan</span>
<span class="t" style="left:1610.00px;top:4308.40px;font-size:22px;line-height:22px;color:#8b8b8b;">17 Jan</span>
<span class="t" style="left:1750.82px;top:4308.40px;font-size:22px;line-height:22px;color:#8b8b8b;">19 Jan</span>
<span class="t" style="left:1891.63px;top:4308.40px;font-size:22px;line-height:22px;color:#8b8b8b;">21 Jan</span>
<span class="t" style="left:2032.44px;top:4308.40px;font-size:22px;line-height:22px;color:#8b8b8b;">23 Jan</span>
<span class="t" style="left:2173.26px;top:4308.40px;font-size:22px;line-height:22px;color:#8b8b8b;">25 Jan</span>
<span class="t" style="left:2314.07px;top:4308.40px;font-size:22px;line-height:22px;color:#8b8b8b;">27 Jan</span>
<span class="t" style="left:2454.88px;top:4308.40px;font-size:22px;line-height:22px;color:#8b8b8b;">29 Jan</span>
<span class="t" style="left:708.30px;top:4379.60px;font-size:24px;line-height:24px;color:#2f333d;letter-spacing:0.277px;">Double room 1</span>
<span class="t" style="left:942.40px;top:4379.60px;font-size:24px;line-height:24px;color:#2f333d;letter-spacing:0.277px;">Double room 2</span>
<span class="t" style="left:1176.50px;top:4379.60px;font-size:24px;line-height:24px;color:#2f333d;letter-spacing:0.277px;">Double room 3</span>
<span class="t" style="left:1410.60px;top:4379.60px;font-size:24px;line-height:24px;color:#2f333d;letter-spacing:0.277px;">Double room 4</span>
<span class="t" style="left:1644.70px;top:4379.60px;font-size:24px;line-height:24px;color:#2f333d;letter-spacing:0.277px;">Double room 5</span>
<span class="t" style="left:1878.80px;top:4379.60px;font-size:24px;line-height:24px;color:#2f333d;letter-spacing:0.277px;">Double room 6</span>
<span class="t" style="left:2112.90px;top:4379.60px;font-size:24px;line-height:24px;color:#2f333d;letter-spacing:0.277px;">Double room 7</span>
<div style="left:40px;top:4544px;width:2880px;height:2px;background:#e8e8e8;"></div>
<span class="t" style="left:344.30px;top:4585.20px;font-size:20px;line-height:20px;color:#c3c3c3;letter-spacing:-0.289px;">© {{CURRENT-YEAR}} {{COMPANY-NAME}}. ALL RIGHTS RESERVED.</span>
</div>
</body></html>
